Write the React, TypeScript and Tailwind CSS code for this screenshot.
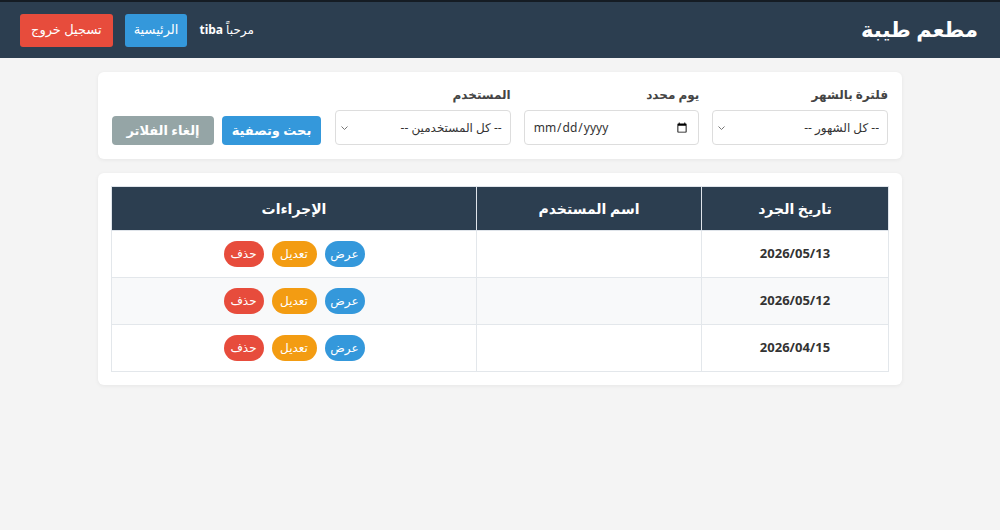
import React from "react";

const rows = ["2026/05/13", "2026/05/12", "2026/04/15"];

function Chevron() {
  return (
    <svg
      className="absolute left-[6px] top-1/2 -translate-y-1/2 pointer-events-none"
      width="7"
      height="5"
      viewBox="0 0 7 5"
      fill="none"
      stroke="#777"
      strokeWidth="1"
    >
      <path d="M0.5 1 L3.5 4 L6.5 1" />
    </svg>
  );
}

export default function App() {
  return (
    <div
      dir="rtl"
      className="min-h-[530px] bg-[#f4f4f4] text-[#333]"
      style={{ fontFamily: '"Noto Sans", "DejaVu Sans", sans-serif' }}
    >
      <header className="h-[58px] bg-[#2c3e50] border-t-2 border-[#151c24] flex items-center justify-between pr-[22px] pl-[20px]">
        <h1 className="text-white text-[21px] font-bold">مطعم طيبة</h1>
        <div className="flex items-center gap-[12px]">
          <span className="text-white text-[12px]">
            مرحباً <b>tiba</b>
          </span>
          <button className="bg-[#3498db] text-white text-[13px] h-[33px] px-[9px] rounded-[3px]">الرئيسية</button>
          <button className="bg-[#e74c3c] text-white text-[13px] h-[33px] px-[11px] rounded-[3px]">تسجيل خروج</button>
        </div>
      </header>

      <main className="px-[98px] pt-[14px] flex flex-col gap-[14px]">
        <section className="bg-white rounded-[6px] shadow-[0_1px_4px_rgba(0,0,0,0.06)] px-[14px] pt-[14px] pb-[14px] flex items-end gap-[13px]">
          <div className="flex flex-col w-[176px]">
            <label className="text-[12px] font-bold text-[#444] mb-[6px]">فلترة بالشهر</label>
            <div className="relative">
              <select className="appearance-none w-full h-[35px] border border-[#ddd] rounded-[4px] pr-2 pl-4 text-[12px] bg-white text-[#333]">
                <option>-- كل الشهور --</option>
              </select>
              <Chevron />
            </div>
          </div>
          <div className="flex flex-col w-[176px]">
            <label className="text-[12px] font-bold text-[#444] mb-[6px]">يوم محدد</label>
            <input dir="ltr" type="date" className="h-[35px] border border-[#ddd] rounded-[4px] px-2 text-[12px] bg-white" />
          </div>
          <div className="flex flex-col w-[176px]">
            <label className="text-[12px] font-bold text-[#444] mb-[6px]">المستخدم</label>
            <div className="relative">
              <select className="appearance-none w-full h-[35px] border border-[#ddd] rounded-[4px] pr-2 pl-4 text-[12px] bg-white text-[#333]">
                <option>-- كل المستخدمين --</option>
              </select>
              <Chevron />
            </div>
          </div>
          <div className="flex items-center gap-[8px] mr-[1px]">
            <button className="w-[99px] h-[29px] bg-[#3498db] text-white text-[13px] font-bold rounded-[4px]">بحث وتصفية</button>
            <button className="w-[102px] h-[29px] bg-[#95a5a6] text-white text-[13px] font-bold rounded-[4px]">إلغاء الفلاتر</button>
          </div>
        </section>

        <section className="bg-white rounded-[6px] shadow-[0_1px_4px_rgba(0,0,0,0.06)] p-[13px]">
          <table className="w-full border-collapse text-center">
            <thead>
              <tr className="bg-[#2c3e50] text-white h-[44px] text-[14px]">
                <th className="w-[187px] font-bold border border-[#dfe4ea]">تاريخ الجرد</th>
                <th className="w-[225px] font-bold border border-[#dfe4ea]">اسم المستخدم</th>
                <th className="font-bold border border-[#dfe4ea]">الإجراءات</th>
              </tr>
            </thead>
            <tbody>
              {rows.map((d, i) => (
                <tr key={d} className={`h-[47px] ${i === 1 ? "bg-[#f8f9fa]" : "bg-white"}`}>
                  <td className="border border-[#e3e7eb] text-[13px] font-bold text-[#333]">{d}</td>
                  <td className="border border-[#e3e7eb]"></td>
                  <td className="border border-[#e3e7eb]">
                    <div className="flex justify-center gap-[8px]">
                      <span className="h-[26px] w-[40px] flex items-center justify-center rounded-full bg-[#3498db] text-white text-[12px]">عرض</span>
                      <span className="h-[26px] w-[45px] flex items-center justify-center rounded-full bg-[#f39c12] text-white text-[12px]">تعديل</span>
                      <span className="h-[26px] w-[40px] flex items-center justify-center rounded-full bg-[#e74c3c] text-white text-[12px]">حذف</span>
                    </div>
                  </td>
                </tr>
              ))}
            </tbody>
          </table>
        </section>
      </main>
    </div>
  );
}
